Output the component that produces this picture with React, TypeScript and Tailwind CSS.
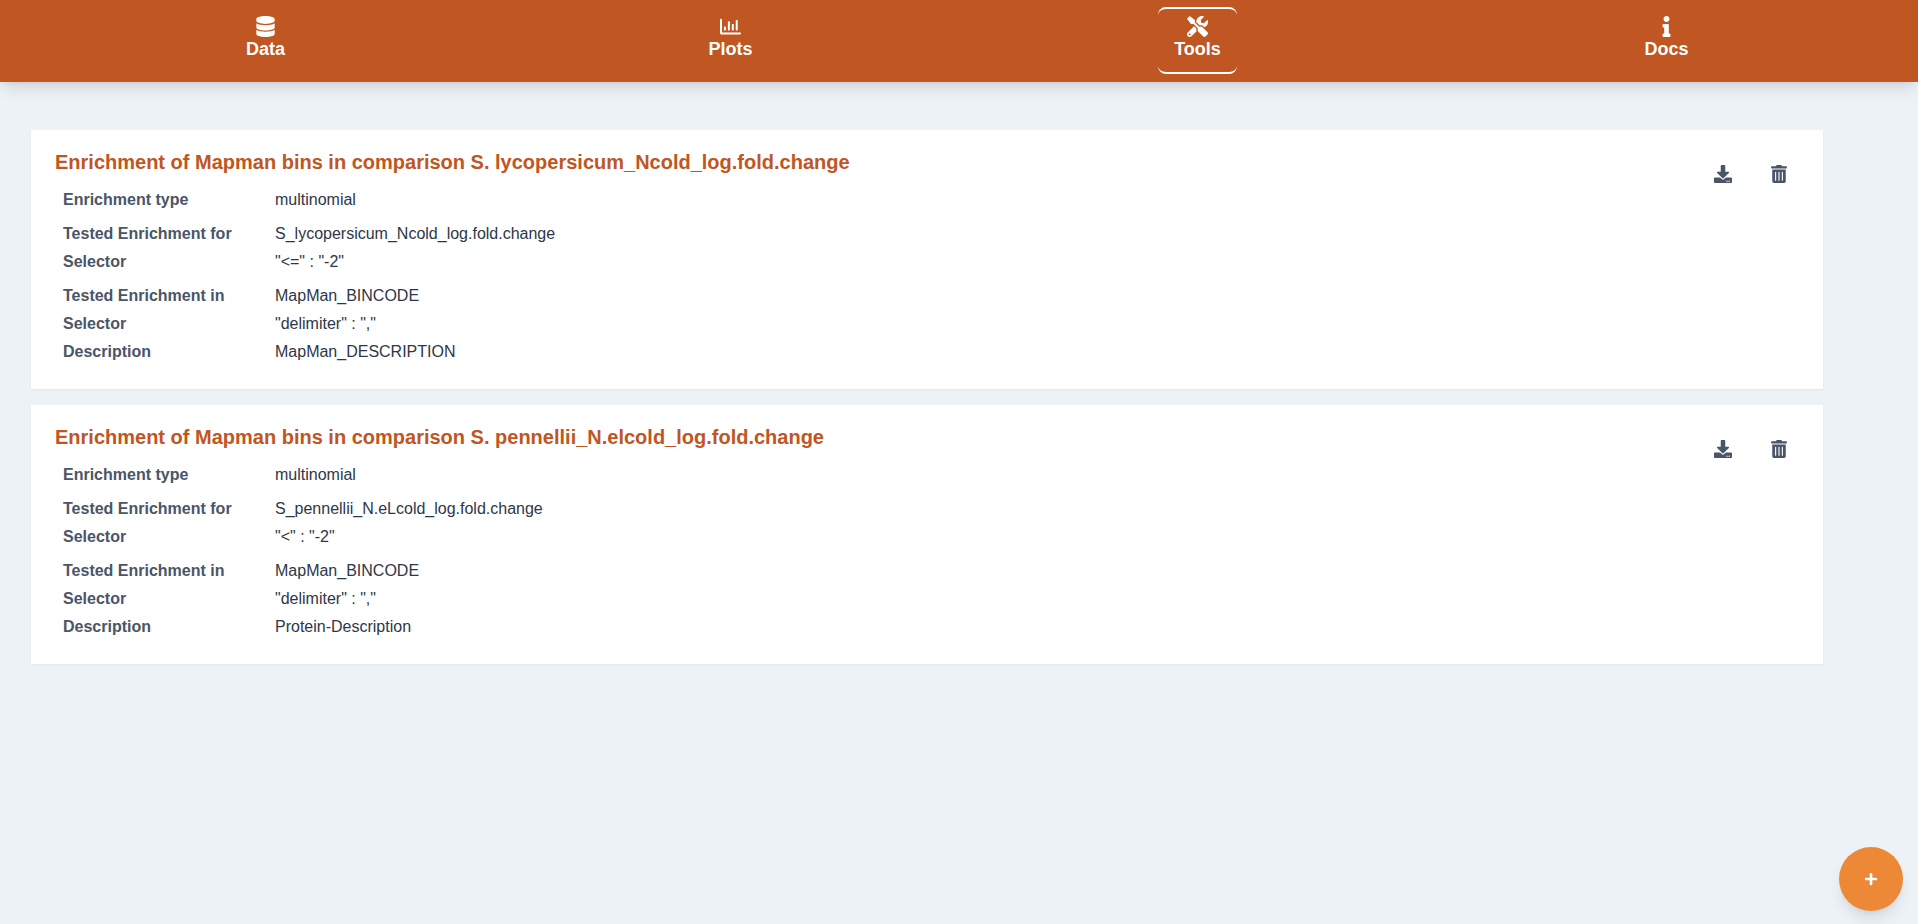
import { FaDatabase, FaRegChartBar, FaTools, FaInfo, FaDownload, FaTrashAlt, FaPlus } from "react-icons/fa";

function NavItem({ icon, label, active, width }: { icon: React.ReactNode; label: string; active?: boolean; width: string }) {
  return (
    <a className={`flex h-[67px] ${width} flex-col items-center justify-start rounded-lg border-y-2 pt-[6px] ${active ? "border-white" : "border-transparent"} text-white`}>
      <span className="flex h-[22px] items-center text-[21px]">{icon}</span>
      <span className="mt-[2px] text-[18px] leading-[20px] font-bold">{label}</span>
    </a>
  );
}

function Row({ label, value }: { label: string; value: string }) {
  return (
    <div className="flex h-[28px] items-center text-[16px]">
      <span className="w-[212px] font-bold text-[#4a5568]">{label}</span>
      <span className="text-[#2d3748]">{value}</span>
    </div>
  );
}

function Card({ title, type, forName, forSel, inName, inSel, desc }: { title: string; type: string; forName: string; forSel: string; inName: string; inSel: string; desc: string }) {
  return (
    <section className="flex w-[1792px] justify-between bg-white pt-[18px] pr-[36px] pb-[23px] pl-[24px] shadow-[0_1px_2px_rgba(0,0,0,0.05)]">
      <div>
        <h2 className="mb-[10px] text-[20px] leading-[28px] font-bold text-[#c05621]">{title}</h2>
        <div className="flex flex-col gap-[6px] pl-[8px]">
          <Row label="Enrichment type" value={type} />
          <div>
            <Row label="Tested Enrichment for" value={forName} />
            <Row label="Selector" value={forSel} />
          </div>
          <div>
            <Row label="Tested Enrichment in" value={inName} />
            <Row label="Selector" value={inSel} />
            <Row label="Description" value={desc} />
          </div>
        </div>
      </div>
      <div className="flex items-start gap-[39px] pt-[17px] text-[#4a5568]">
        <FaDownload className="h-[18px] w-[18px]" />
        <FaTrashAlt className="h-[18px] w-[16px]" />
      </div>
    </section>
  );
}

export default function App() {
  return (
    <div className="relative min-h-[924px] bg-[#edf2f7] font-['Liberation_Sans',sans-serif]">
      <header className="flex h-[82px] items-start justify-around bg-[#c05621] pt-[7px] pr-[17px] pl-[33px] shadow-lg">
        <NavItem icon={<FaDatabase />} label="Data" width="w-[75px]" />
        <NavItem icon={<FaRegChartBar />} label="Plots" width="w-[75px]" />
        <NavItem icon={<FaTools />} label="Tools" active width="w-[79px]" />
        <NavItem icon={<FaInfo />} label="Docs" width="w-[79px]" />
      </header>
      <main className="flex flex-col gap-[16px] pt-[48px] pl-[31px]">
        <Card
          title="Enrichment of Mapman bins in comparison S. lycopersicum_Ncold_log.fold.change"
          type="multinomial"
          forName="S_lycopersicum_Ncold_log.fold.change"
          forSel={'"<=" : "-2"'}
          inName="MapMan_BINCODE"
          inSel={'"delimiter" : ","'}
          desc="MapMan_DESCRIPTION"
        />
        <Card
          title="Enrichment of Mapman bins in comparison S. pennellii_N.elcold_log.fold.change"
          type="multinomial"
          forName="S_pennellii_N.eLcold_log.fold.change"
          forSel={'"<" : "-2"'}
          inName="MapMan_BINCODE"
          inSel={'"delimiter" : ","'}
          desc="Protein-Description"
        />
      </main>
      <button className="absolute right-[15px] bottom-[13px] flex h-[64px] w-[64px] items-center justify-center rounded-full bg-[#ed8936] text-white shadow-lg">
        <FaPlus className="h-[14px] w-[14px]" />
      </button>
    </div>
  );
}
